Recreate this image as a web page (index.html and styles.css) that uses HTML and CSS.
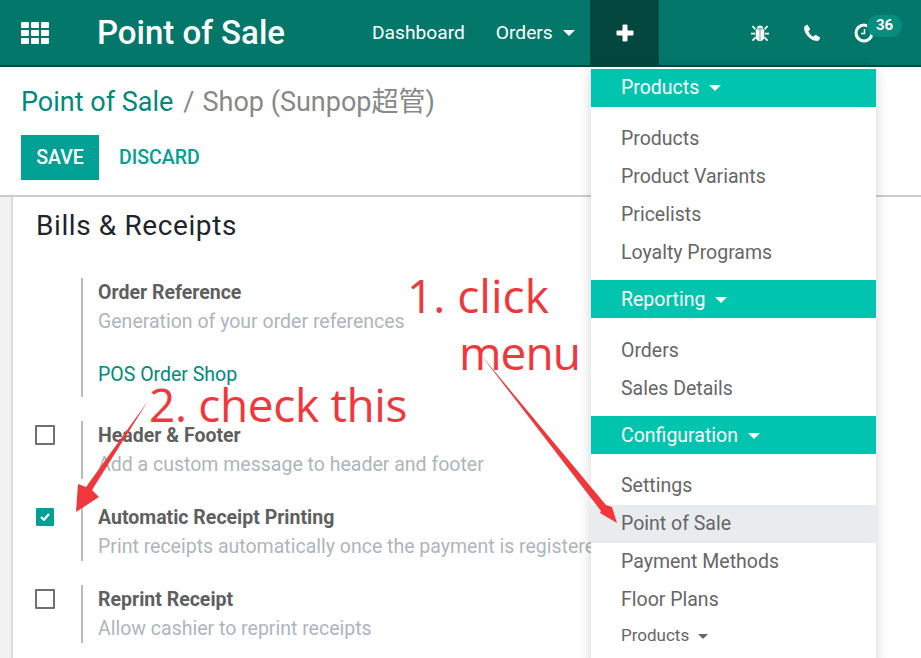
FILE: index.html
```html
<!DOCTYPE html>
<html lang="en">
<head>
    <meta charset="UTF-8">
    <meta name="viewport" content="width=device-width, initial-scale=1.0">
    <title>Point of Sale</title>
    <link rel="stylesheet" href="styles.css">
</head>
<body>
    <header class="navbar">
        <svg class="apps" width="28" height="22" viewBox="0 0 28 22" fill="#fff">
            <rect x="0" y="0" width="8" height="6" rx="1"/><rect x="10" y="0" width="8" height="6" rx="1"/><rect x="20" y="0" width="8" height="6" rx="1"/>
            <rect x="0" y="8" width="8" height="6" rx="1"/><rect x="10" y="8" width="8" height="6" rx="1"/><rect x="20" y="8" width="8" height="6" rx="1"/>
            <rect x="0" y="16" width="8" height="6" rx="1"/><rect x="10" y="16" width="8" height="6" rx="1"/><rect x="20" y="16" width="8" height="6" rx="1"/>
        </svg>
        <div class="brand">Point of Sale</div>
        <nav class="nav-links">
            <span>Dashboard</span>
            <span class="with-caret">Orders <i class="caret"></i></span>
        </nav>
        <div class="plus-tab">
            <svg width="18" height="18" viewBox="0 0 18 18" fill="#fff"><path d="M6.500 1.500a1 1 0 0 1 1-1h3a1 1 0 0 1 1 1v5h5a1 1 0 0 1 1 1v3a1 1 0 0 1-1 1h-5v5a1 1 0 0 1-1 1h-3a1 1 0 0 1-1-1v-5h-5a1 1 0 0 1-1-1v-3a1 1 0 0 1 1-1h5z"/></svg>
        </div>
        <div class="systray">
            <svg width="18" height="18" viewBox="0 0 18 18" fill="#fff">
                <path d="M5.600 4.400C6 2.600 7.300 1.400 9 1.400s3 1.200 3.400 3z"/>
                <path d="M4.700 5.200h4V17.200C6.200 16.900 4.700 15 4.700 12.700zM9.300 5.200h4v7.500c0 2.300-1.500 4.200-4 4.500z"/>
                <path d="M.8 2.800l1.200-1.200 3 3-1.200 1.200zM17.200 2.800L16 1.600l-3 3 1.200 1.200zM0 8.800h4v1.800H0zM14 8.800h4v1.800h-4zM.8 16l3.200-3.200 1.200 1.200-3.200 3.200zM17.200 16L14 12.800 12.800 14l3.200 3.200z"/>
            </svg>
            <svg class="phone" width="18" height="18" viewBox="0 0 18 18" fill="#fff"><path d="M4.600 1l2.400 3.800c.2.400.1.800-.2 1.100L5.300 7.200c.9 2.200 2.800 4.300 5.200 5.500l1.300-1.500c.3-.3.8-.4 1.100-.2l3.800 2.300c.4.200.5.700.3 1.100-.8 1.700-2 2.600-3.300 2.600C7.500 16.900 1.100 9.800 1.100 4.100c0-1.300.9-2.500 2.500-3.200.4-.2.8-.1 1 .1z"/></svg>
            <div class="activity">
                <svg width="22" height="22" viewBox="0 0 22 22" fill="none" stroke="#fff"><circle cx="11" cy="11" r="8" stroke-width="3"/><path d="M11.500 7v4.500H8" stroke-width="1.500"/></svg>
                <span class="badge">36</span>
            </div>
        </div>
    </header>

    <section class="control-panel">
        <div class="breadcrumb"><span class="crumb-link">Point of Sale</span><span class="crumb-sep">/</span><span class="crumb-current">Shop (Sunpop超管)</span></div>
        <div class="actions">
            <button class="btn-save">SAVE</button>
            <button class="btn-discard">DISCARD</button>
        </div>
    </section>

    <main class="content">
        <div class="sheet">
            <h2>Bills &amp; Receipts</h2>
            <div class="setting tall">
                <div class="check-col"></div>
                <div class="setting-body">
                    <div class="setting-title">Order Reference</div>
                    <div class="setting-help">Generation of your order references</div>
                    <a class="setting-link">POS Order Shop</a>
                </div>
            </div>
            <div class="setting">
                <div class="check-col"><span class="checkbox"></span></div>
                <div class="setting-body">
                    <div class="setting-title">Header &amp; Footer</div>
                    <div class="setting-help">Add a custom message to header and footer</div>
                </div>
            </div>
            <div class="setting">
                <div class="check-col">
                    <span class="checkbox checked">
                        <svg width="10" height="8" viewBox="0 0 10 8" fill="none" stroke="#fff" stroke-width="2.200"><path d="M1 4l3 2.800L9 1"/></svg>
                    </span>
                </div>
                <div class="setting-body">
                    <div class="setting-title">Automatic Receipt Printing</div>
                    <div class="setting-help">Print receipts automatically once the payment is registered</div>
                </div>
            </div>
            <div class="setting">
                <div class="check-col"><span class="checkbox"></span></div>
                <div class="setting-body">
                    <div class="setting-title">Reprint Receipt</div>
                    <div class="setting-help">Allow cashier to reprint receipts</div>
                </div>
            </div>
        </div>
    </main>

    <aside class="dropdown">
        <div class="menu-head">Products <i class="caret"></i></div>
        <ul class="first">
            <li>Products</li>
            <li>Product Variants</li>
            <li>Pricelists</li>
            <li>Loyalty Programs</li>
        </ul>
        <div class="menu-head">Reporting <i class="caret"></i></div>
        <ul class="second">
            <li>Orders</li>
            <li>Sales Details</li>
        </ul>
        <div class="menu-head">Configuration <i class="caret"></i></div>
        <ul>
            <li>Settings</li>
            <li class="active">Point of Sale</li>
            <li>Payment Methods</li>
            <li>Floor Plans</li>
            <li class="small">Products <i class="caret dark"></i></li>
        </ul>
    </aside>

    <div class="note note-click">1. click</div>
    <div class="note note-menu">menu</div>
    <div class="note note-check">2. check this</div>
    <svg class="arrows" width="921" height="658" viewBox="0 0 921 658" fill="#f0383c">
        <path d="M481 355L606 505L612 507L617 523L600 513L601 511Z"/>
        <path d="M148 401L92 490L99 497L76 512L78 484L86 487Z"/>
    </svg>
</body>
</html>
```

FILE: styles.css
```css
* {
    box-sizing: border-box;
}
html, body {
    height: 100%;
}
body {
    margin: 0;
    height: 658px;
    overflow: hidden;
    position: relative;
    font-family: Roboto, "Noto Sans CJK SC", sans-serif;
    background: #fff;
    color: #666;
}

/* top bar */
.navbar {
    height: 67px;
    display: flex;
    align-items: center;
    background: #02776a;
    border-bottom: 2px solid #034a41;
    color: #fff;
}
.apps {
    margin-left: 21px;
    flex: none;
}
.brand {
    margin-left: 48px;
    width: 275px;
    font-size: 33px;
    font-weight: 500;
}
.nav-links {
    display: flex;
    gap: 31px;
    width: 218px;
    font-size: 19.200px;
}
.caret {
    display: inline-block;
    width: 0;
    height: 0;
    margin-left: 5px;
    vertical-align: 3px;
    border-top: 6px solid #fff;
    border-left: 6px solid transparent;
    border-right: 6px solid transparent;
}
.caret.dark {
    border-top-color: #666;
    border-top-width: 5px;
    border-left-width: 5px;
    border-right-width: 5px;
    vertical-align: 2px;
}
.plus-tab {
    width: 69px;
    height: 65px;
    display: flex;
    align-items: center;
    justify-content: center;
    background: #03473f;
}
.systray {
    display: flex;
    align-items: center;
    margin-left: 92px;
}
.phone {
    margin-left: 34px;
}
.activity {
    position: relative;
    margin-left: 32px;
    width: 22px;
    height: 22px;
}
.badge {
    position: absolute;
    left: 14px;
    top: -7px;
    width: 35px;
    height: 22px;
    border-radius: 11px;
    background: #058d7e;
    font-size: 15px;
    font-weight: 700;
    line-height: 20px;
    text-align: center;
}

/* breadcrumb and buttons */
.control-panel {
    height: 130px;
    padding: 13px 21px 0;
    border-bottom: 2px solid #ccc;
    background: #fff;
}
.breadcrumb {
    height: 35px;
    display: flex;
    align-items: baseline;
    font-size: 27px;
    color: #888;
}
.crumb-link {
    color: #00897b;
}
.crumb-sep {
    margin: 0 8px 0 10px;
}
.actions {
    display: flex;
    align-items: center;
    margin-top: 20px;
}
.actions button {
    border: 0;
    font-family: inherit;
    font-size: 19.500px;
    font-weight: 500;
}
.btn-save {
    width: 78px;
    height: 45px;
    padding: 0;
    background: #00a094;
    color: #fff;
}
.btn-discard {
    margin-left: 20px;
    padding: 0;
    background: none;
    color: #00a094;
}

/* form */
.content {
    height: 461px;
    padding-left: 11px;
    background: #f2f2f2;
}
.sheet {
    height: 100%;
    padding: 12px 0 0 24px;
    background: #fff;
    border-left: 2px solid #d9d9d9;
}
h2 {
    margin: 0 0 35px -1px;
    font-size: 28px;
    font-weight: 400;
    letter-spacing: 0.6px;
    line-height: 34px;
    color: #212529;
}
.setting {
    display: flex;
    margin-bottom: 24px;
    height: 58px;
}
.setting.tall {
    height: 119px;
}
.check-col {
    width: 44px;
    flex: none;
    padding-top: 4px;
}
.checkbox {
    display: flex;
    align-items: center;
    justify-content: center;
    width: 20px;
    height: 20px;
    margin-left: -2px;
    border: 2px solid #707070;
    border-radius: 1px;
    background: #fff;
}
.checkbox.checked {
    width: 18px;
    height: 18px;
    margin-left: -1px;
    margin-top: 1px;
    border: 0;
    background: #00a094;
}
.setting-body {
    border-left: 2px solid #bbb;
    padding-left: 15px;
    font-size: 19.500px;
    white-space: nowrap;
}
.setting-title {
    font-weight: 700;
    line-height: 29px;
    color: #5f5f5f;
}
.setting-help {
    line-height: 29px;
    color: #adb5bd;
}
.setting-link {
    display: block;
    margin-top: 24px;
    line-height: 29px;
    color: #00897b;
}

/* dropdown menu */
.dropdown {
    position: absolute;
    left: 591px;
    top: 67px;
    width: 285px;
    height: 600px;
    padding-top: 2px;
    background: #fff;
    box-shadow: 0 3px 12px rgba(0, 0, 0, 0.18);
}
.menu-head {
    height: 38px;
    padding-left: 30px;
    background: #00c4ad;
    color: #fff;
    font-size: 19.500px;
    line-height: 39px;
}
.menu-head:first-child {
    line-height: 37px;
}
.dropdown ul {
    list-style: none;
    margin: 0;
    padding: 13px 0 9px;
}
.dropdown ul.first {
    padding-bottom: 8px;
}
.dropdown ul.second {
    padding: 14px 0 8px;
}
.dropdown li {
    height: 38px;
    padding-left: 30px;
    font-size: 19.500px;
    line-height: 38px;
    color: #666;
}
.dropdown li.active {
    background: #e9ecef;
}
.dropdown li.small {
    font-size: 17px;
    line-height: 32px;
}

/* red annotations painted on top */
.note {
    position: absolute;
    font-family: "Open Sans", "Noto Sans", sans-serif;
    font-size: 46px;
    line-height: 60px;
    color: #f0383c;
    white-space: nowrap;
}
.note-click {
    left: 407px;
    top: 265px;
}
.note-menu {
    left: 459px;
    top: 322px;
    letter-spacing: -1px;
}
.note-check {
    left: 149px;
    top: 374px;
    letter-spacing: -0.35px;
}
.arrows {
    position: absolute;
    left: 0;
    top: 0;
}
```
